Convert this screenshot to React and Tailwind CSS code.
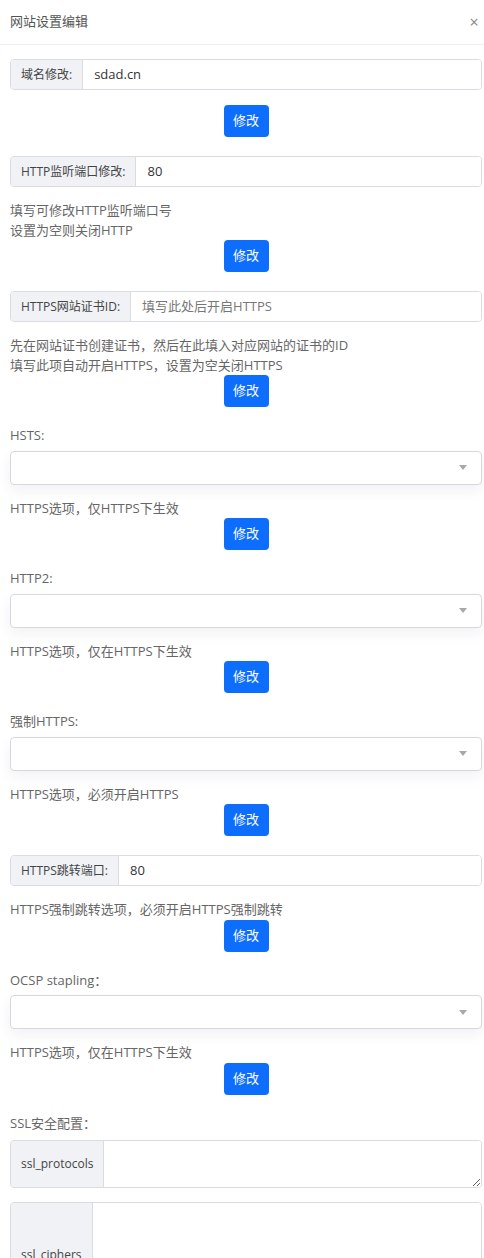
const InputGroup = ({ label, value, placeholder }) => (
    <div className="flex h-[31px] rounded-[4px] border border-[#d9dce3] overflow-hidden">
        <span className="flex items-center px-[10px] bg-[#f0f2f6] border-r border-[#d9dce3] text-[12px] text-[#444] whitespace-nowrap">
            {label}
        </span>
        <input
            type="text"
            defaultValue={value}
            placeholder={placeholder}
            className="flex-1 min-w-0 px-[11px] text-[13px] text-[#333] placeholder:text-[#777] outline-none bg-white"
        />
    </div>
);

const Btn = () => (
    <button
        type="button"
        className="block mx-auto w-[45px] h-[32px] rounded-[4px] bg-[#0d6efd] text-white text-[13px]">
        修改
    </button>
);

const Help = ({ children }) => (
    <p className="mt-[14px] text-[13px] leading-[19.5px] text-[#666]">{children}</p>
);

const Label = ({ children }) => (
    <div className="mt-[19px] text-[13px] leading-[19.5px] text-[#666]">{children}</div>
);

const Select = () => (
    <div className="mt-[5px] h-[34px] rounded-[4px] border border-[#d5d8df] bg-white shadow-[0_6px_14px_rgba(30,40,90,0.06)] flex items-center justify-end pr-[14px]">
        <svg width="8" height="5" viewBox="0 0 8 5">
            <path d="M0 0h8L4 5z" fill="#a8a8a8" />
        </svg>
    </div>
);

const TextGroup = ({ label, height }) => (
    <div className="flex rounded-[4px] border border-[#d9dce3] overflow-hidden">
        <span className="flex items-center px-[10px] bg-[#f0f2f6] border-r border-[#d9dce3] text-[12px] text-[#444] whitespace-nowrap">
            {label}
        </span>
        <textarea className={`flex-1 min-w-0 px-[10px] py-[6px] text-[13px] outline-none bg-white ${height}`} />
    </div>
);

const App = () => {
    return (
        <div className="min-h-screen bg-white font-['Open_Sans','Noto_Sans_CJK_SC',sans-serif]">
            {/* Header */}
            <div className="h-[45px] flex items-center justify-between pl-[10px] pr-[3px] border-b border-[#eceef2]">
                <h2 className="text-[13px] text-[#555]">网站设置编辑</h2>
                <button type="button" className="w-[14px] text-[16px] leading-none text-[#888]">×</button>
            </div>

            {/* Konten */}
            <div className="pl-[10px] pr-[2px] pt-[14px] pb-[20px]">
                <InputGroup label="域名修改:" value="sdad.cn" />
                <div className="mt-[15px]"><Btn /></div>

                <div className="mt-[19px]">
                    <InputGroup label="HTTP监听端口修改:" value="80" />
                </div>
                <Help>
                    填写可修改HTTP监听端口号<br />设置为空则关闭HTTP
                </Help>
                <Btn />

                <div className="mt-[19px]">
                    <InputGroup label="HTTPS网站证书ID:" placeholder="填写此处后开启HTTPS" />
                </div>
                <Help>
                    先在网站证书创建证书，然后在此填入对应网站的证书的ID<br />填写此项自动开启HTTPS，设置为空关闭HTTPS
                </Help>
                <Btn />

                <Label>HSTS:</Label>
                <Select />
                <Help>HTTPS选项，仅HTTPS下生效</Help>
                <Btn />

                <Label>HTTP2:</Label>
                <Select />
                <Help>HTTPS选项，仅在HTTPS下生效</Help>
                <Btn />

                <Label>强制HTTPS:</Label>
                <Select />
                <Help>HTTPS选项，必须开启HTTPS</Help>
                <Btn />

                <div className="mt-[19px]">
                    <InputGroup label="HTTPS跳转端口:" value="80" />
                </div>
                <Help>HTTPS强制跳转选项，必须开启HTTPS强制跳转</Help>
                <Btn />

                <Label>OCSP stapling：</Label>
                <Select />
                <Help>HTTPS选项，仅在HTTPS下生效</Help>
                <Btn />

                <Label>SSL安全配置：</Label>
                <div className="mt-[7px]">
                    <TextGroup label="ssl_protocols" height="h-[46px]" />
                </div>
                <div className="mt-[14px]">
                    <TextGroup label="ssl_ciphers" height="h-[104px]" />
                </div>
            </div>
        </div>
    );
};

export default App;
